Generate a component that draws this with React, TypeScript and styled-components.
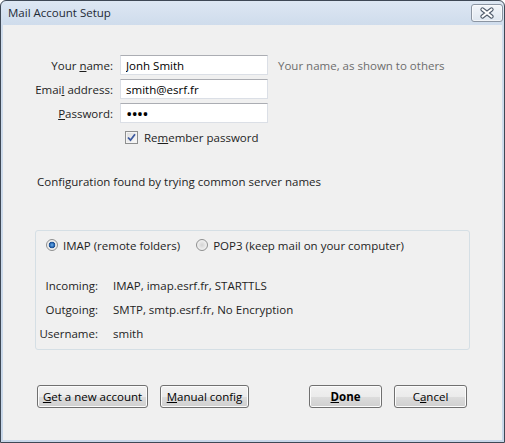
import styled, { createGlobalStyle } from "styled-components"

const GlobalStyle = createGlobalStyle`
    html, body {
        margin: 0;
        padding: 0;
        background: #ffffff;
    }
    body {
        font-family: "Segoe UI", "Open Sans", sans-serif;
        font-size: 11.5px;
        color: #1e1e1e;
    }
    * {
        box-sizing: border-box;
    }
`

export default function App() {
    return (
        <>
            <GlobalStyle />
            <Window>
                <TitleBar>
                    <Title>Mail Account Setup</Title>
                    <CloseButton>
                        <svg width="16" height="12" viewBox="0 0 16 12">
                            <path d="M3.5 2.5 L12.5 9.5 M12.5 2.5 L3.5 9.5" stroke="#4e5a6a" strokeWidth="4.2" strokeLinecap="round" />
                            <path d="M3.5 2.5 L12.5 9.5 M12.5 2.5 L3.5 9.5" stroke="#ffffff" strokeWidth="2.2" strokeLinecap="round" />
                        </svg>
                    </CloseButton>
                </TitleBar>
                <Body>
                    <FormGrid>
                        <Label>Your <u>n</u>ame:</Label>
                        <Input defaultValue="Jonh Smith" />
                        <Hint>Your name, as shown to others</Hint>

                        <Label>Emai<u>l</u> address:</Label>
                        <Input defaultValue="smith@esrf.fr" />
                        <span />

                        <Label><u>P</u>assword:</Label>
                        <Input type="password" defaultValue="abcd" $secret />
                        <span />

                        <span />
                        <CheckRow>
                            <CheckBox>
                                <svg width="9" height="9" viewBox="0 0 9 9">
                                    <path d="M1 4.5 L3.5 7.2 L8 1.2" fill="none" stroke="#3d5aa0" strokeWidth="1.8" />
                                </svg>
                            </CheckBox>
                            <span>Re<u>m</u>ember password</span>
                        </CheckRow>
                    </FormGrid>

                    <Status>Configuration found by trying common server names</Status>

                    <GroupBox>
                        <RadioRow>
                            <RadioItem>
                                <Radio $checked />
                                <span>IMAP (remote folders)</span>
                            </RadioItem>
                            <RadioItem>
                                <Radio />
                                <span>POP3 (keep mail on your computer)</span>
                            </RadioItem>
                        </RadioRow>
                        <InfoGrid>
                            <InfoLabel>Incoming:</InfoLabel>
                            <span>IMAP, imap.esrf.fr, STARTTLS</span>
                            <InfoLabel>Outgoing:</InfoLabel>
                            <span>SMTP, smtp.esrf.fr, No Encryption</span>
                            <InfoLabel>Username:</InfoLabel>
                            <span>smith</span>
                        </InfoGrid>
                    </GroupBox>

                    <ButtonBar>
                        <ButtonGroup>
                            <Button $width={111}><u>G</u>et a new account</Button>
                            <Button $width={89}><u>M</u>anual config</Button>
                        </ButtonGroup>
                        <ButtonGroup>
                            <Button $width={73} $primary><u>D</u>one</Button>
                            <Button $width={73}>C<u>a</u>ncel</Button>
                        </ButtonGroup>
                    </ButtonBar>
                </Body>
            </Window>
        </>
    )
}

const Window = styled.div`
    width: 505px;
    height: 443px;
    display: flex;
    flex-direction: column;
    padding: 0 2px 2px;
    border: 1px solid #3e4855;
    border-radius: 6px 6px 0 0;
    background: linear-gradient(#dde7f3, #cfdcec 24px, #c8d7e9);
`

const TitleBar = styled.div`
    height: 24px;
    display: flex;
    justify-content: space-between;
    align-items: flex-start;
    padding: 0 0 0 5px;
`

const Title = styled.span`
    line-height: 24px;
    font-size: 11.5px;
    color: #1e2a36;
`

const CloseButton = styled.div`
    width: 32px;
    height: 18px;
    margin-top: 3px;
    margin-right: -1px;
    display: flex;
    justify-content: center;
    align-items: center;
    border: 1px solid #8b95a2;
    border-radius: 3px;
    background: linear-gradient(#f3f6fa, #dfe7f0);
    box-shadow: inset 0 0 0 1px rgba(255, 255, 255, 0.6);
`

const Body = styled.div`
    flex: 1;
    display: flex;
    flex-direction: column;
    padding-top: 30px;
    background: #f0f0f0;
`

const FormGrid = styled.div`
    display: grid;
    grid-template-columns: 110px 148px auto;
    grid-template-rows: 20px 20px 20px 18px;
    column-gap: 7px;
    row-gap: 4px;
    align-items: center;
`

const Label = styled.label`
    text-align: right;
    white-space: nowrap;
`

const Input = styled.input<{ $secret?: boolean }>`
    height: 20px;
    width: 148px;
    padding: 0 5px;
    font: inherit;
    font-size: ${(p) => (p.$secret ? "17px" : "inherit")};
    letter-spacing: ${(p) => (p.$secret ? "-1px" : "0")};
    color: #000;
    background: #ffffff;
    border: 1px solid #dbdfe6;
    border-top-color: #abadb3;
    outline: none;
`

const Hint = styled.span`
    margin-left: 3px;
    color: #6d6d6d;
    white-space: nowrap;
`

const CheckRow = styled.div`
    grid-column: 2 / 4;
    display: flex;
    align-items: center;
    gap: 6px;
    padding-left: 5px;
    margin-top: 3px;
`

const CheckBox = styled.span`
    width: 13px;
    height: 13px;
    display: flex;
    justify-content: center;
    align-items: center;
    border: 1px solid #8e8f8f;
    background: linear-gradient(135deg, #dcdcdc, #fbfbfb);
    box-shadow: inset 0 0 0 1px #f4f4f4;
`

const Status = styled.div`
    margin: 29px 0 0 34px;
    line-height: 16px;
`

const GroupBox = styled.div`
    margin: 40px 32px 0;
    height: 120px;
    padding: 6px 0 0 10px;
    border: 1px solid #d5dfe5;
    border-radius: 3px;
`

const RadioRow = styled.div`
    display: flex;
    align-items: center;
    gap: 16px;
    height: 16px;
`

const RadioItem = styled.div`
    display: flex;
    align-items: center;
    gap: 5px;
`

const Radio = styled.span<{ $checked?: boolean }>`
    width: 12px;
    height: 12px;
    border-radius: 50%;
    border: 1px solid #8e8f8f;
    background: ${(p) =>
        p.$checked
            ? "radial-gradient(circle, #6fb5ef 0, #2b69b5 2px, #1d4f8e 3px, #e9e9e9 3.6px, #f6f6f6 6px)"
            : "radial-gradient(circle, #d3d3d3 0, #e6e6e6 3px, #f7f7f7 6px)"};
`

const InfoGrid = styled.div`
    display: grid;
    grid-template-columns: 60px auto;
    grid-auto-rows: 16px;
    column-gap: 15px;
    row-gap: 8px;
    align-items: center;
    margin: 24px 0 0 -8px;
`

const InfoLabel = styled.span`
    text-align: right;
`

const ButtonBar = styled.div`
    display: flex;
    justify-content: space-between;
    margin: 35px 35px 0 34px;
`

const ButtonGroup = styled.div`
    display: flex;
    gap: 12px;
`

const Button = styled.button<{ $width: number; $primary?: boolean }>`
    width: ${(p) => p.$width}px;
    height: 23px;
    padding: 0;
    font: inherit;
    font-weight: ${(p) => (p.$primary ? 700 : 400)};
    color: #000;
    border: 1px solid #707070;
    border-radius: 3px;
    background: linear-gradient(#f2f2f2 0%, #ebebeb 50%, #dddddd 50%, #cfcfcf 100%);
    box-shadow: inset 0 0 0 1px #fcfcfc;
`
